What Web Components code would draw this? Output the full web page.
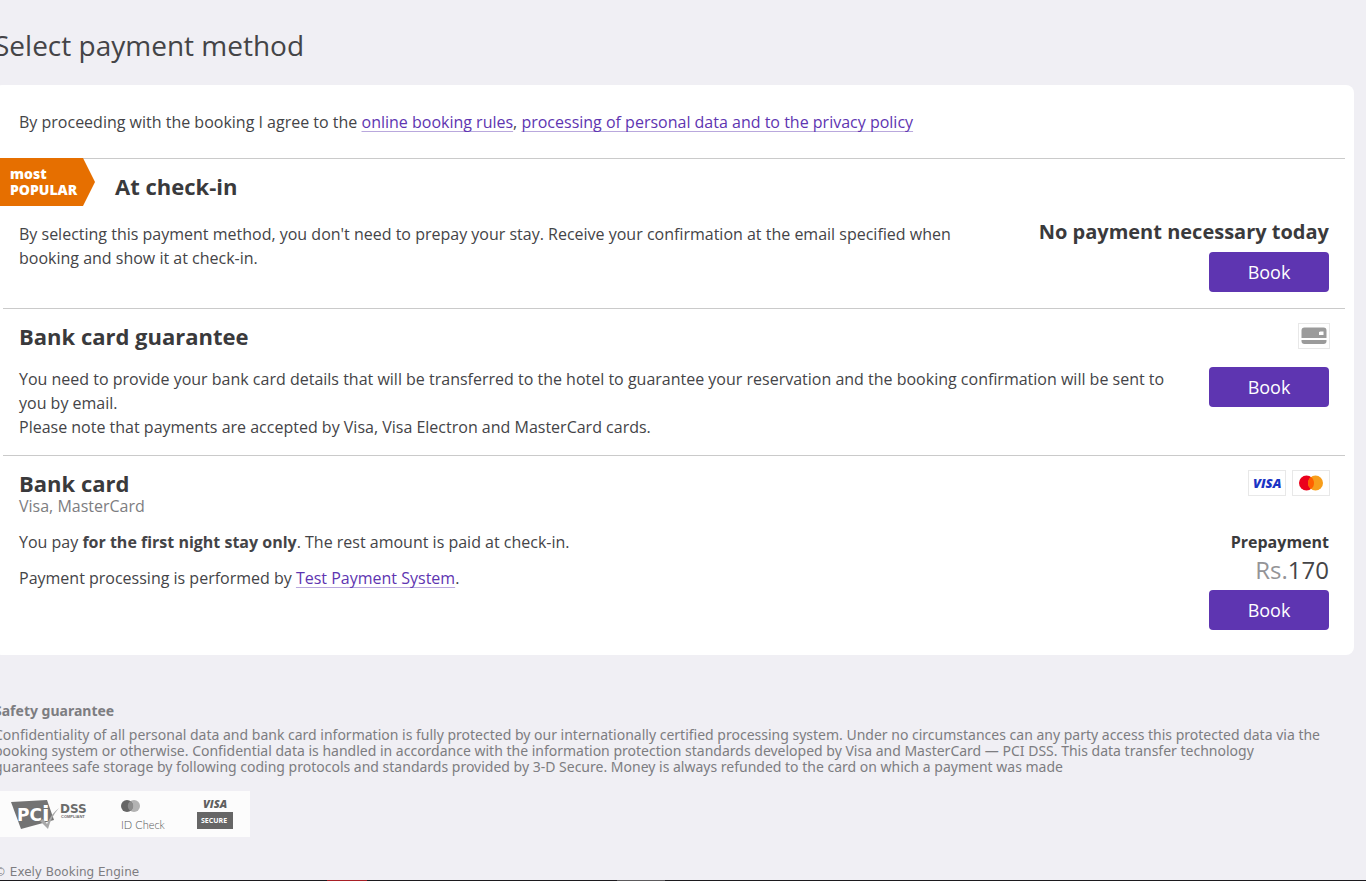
<!DOCTYPE html>
<html lang="en">
<head>
<meta charset="utf-8">
<meta name="viewport" content="width=device-width, initial-scale=1">
<title>Select payment method</title>
<style>
    body {
        --pay-text: #444447;
        --pay-heading: #3a3a3c;
        --pay-muted: #7d7d81;
        --pay-accent: #5e35b1;
        --pay-line: #cacaca;
        margin: 0;
        background: #f0eff4;
        color: var(--pay-text);
        font: 16px/24px "Open Sans", "Noto Sans", sans-serif;
    }
</style>
</head>
<body>
<pay-page>
    <h1 slot="title">Select payment method</h1>
    <pay-panel>
        <span slot="terms">By proceeding with the booking I agree to the <pay-link href="#rules">online booking rules</pay-link>, <pay-link href="#privacy">processing of personal data and to the privacy policy</pay-link></span>
        <pay-method heading="At check-in" popular>
            By selecting this payment method, you don't need to prepay your stay. Receive your confirmation at the email specified when booking and show it at check-in.
            <span slot="note">No payment necessary today</span>
        </pay-method>
        <pay-method heading="Bank card guarantee">
            <pay-brand slot="brands" name="card"></pay-brand>
            You need to provide your bank card details that will be transferred to the hotel to guarantee your reservation and the booking confirmation will be sent to you by email.<br>Please note that payments are accepted by Visa, Visa Electron and MasterCard cards.
        </pay-method>
        <pay-method heading="Bank card" subheading="Visa, MasterCard">
            <pay-brand slot="brands" name="visa"></pay-brand>
            <pay-brand slot="brands" name="mastercard"></pay-brand>
            <pay-text>You pay <b>for the first night stay only</b>. The rest amount is paid at check-in.</pay-text>
            <pay-text>Payment processing is performed by <pay-link href="#processor">Test Payment System</pay-link>.</pay-text>
            <pay-price slot="price" label="Prepayment" currency="Rs." amount="170"></pay-price>
        </pay-method>
    </pay-panel>
    <pay-safety slot="footer"></pay-safety>
</pay-page>
<pay-taskbar></pay-taskbar>

<script>
// PayPage
class PayPage extends HTMLElement {

    constructor() {
        super();

        var shadowRoot = this.attachShadow({ mode: 'open' });
        shadowRoot.innerHTML = `<style>
        :host {
            display: block;
            overflow: hidden;
        }
        .page {
            margin: 0 12px 0 -6px;
            padding-top: 25px;
        }
        ::slotted(h1) {
            margin: 0 0 20px;
            font-size: 28px;
            line-height: 40px;
            font-weight: 400;
        }
        </style>
        <main class="page">
            <slot name="title"></slot>
            <slot></slot>
            <slot name="footer"></slot>
        </main>
        `
    };
}

// PayPanel
class PayPanel extends HTMLElement {

    constructor() {
        super();

        var shadowRoot = this.attachShadow({ mode: 'open' });
        shadowRoot.innerHTML = `<style>
        :host {
            display: block;
            background: #fff;
            border-radius: 8px;
            padding: 0 9px 9px;
        }
        .terms {
            padding: 25px 16px 24px;
        }
        </style>
        <div class="terms"><slot name="terms"></slot></div>
        <slot></slot>
        `
    };
}

// PayLink
class PayLink extends HTMLElement {

    get href() {
        return this.getAttribute('href');
    }

    constructor() {
        super();

        var shadowRoot = this.attachShadow({ mode: 'open' });
        shadowRoot.innerHTML = `<style>
        :host {
            display: inline;
        }
        a {
            color: var(--pay-accent);
            text-decoration: underline 1px #b9a8dd;
            text-decoration-skip-ink: none;
            text-underline-offset: 3px;
        }
        a:hover {
            text-decoration: none;
        }
        </style><a href="${this.href}"><slot></slot></a>`
    };
}

// PayText
class PayText extends HTMLElement {

    constructor() {
        super();

        var shadowRoot = this.attachShadow({ mode: 'open' });
        shadowRoot.innerHTML = `<style>
        :host {
            display: block;
            margin-bottom: 12px;
        }
        </style><slot></slot>`
    };
}

// PayButton
class PayButton extends HTMLElement {

    constructor() {
        super();

        var shadowRoot = this.attachShadow({ mode: 'open' });
        shadowRoot.innerHTML = `<style>
        :host {
            display: block;
        }
        button {
            display: block;
            width: 120px;
            height: 40px;
            padding: 0;
            border: 0;
            border-radius: 4px;
            background: var(--pay-accent);
            color: #fff;
            font: 500 18px/40px "Open Sans", "Noto Sans", sans-serif;
            cursor: pointer;
        }
        button:hover {
            background: #512da8;
        }
        </style>
        <button type="button"><slot></slot></button>
        `
    };
}

// PayBadge
class PayBadge extends HTMLElement {

    constructor() {
        super();

        var shadowRoot = this.attachShadow({ mode: 'open' });
        shadowRoot.innerHTML = `<style>
        :host {
            display: block;
            box-sizing: border-box;
            width: 101px;
            height: 48px;
            padding: 8px 0 8px 16px;
            background: #e66f00;
            clip-path: polygon(0 0, 89px 0, 100% 50%, 89px 100%, 0 100%);
            color: #fff;
            font-size: 14px;
            line-height: 16px;
            font-weight: 800;
        }
        </style>
        most<br>POPULAR
        `
    };
}

// PayPrice
class PayPrice extends HTMLElement {

    constructor() {
        super();

        var shadowRoot = this.attachShadow({ mode: 'open' });
        shadowRoot.innerHTML = `<style>
        :host {
            display: block;
            text-align: right;
        }
        .label {
            font-weight: 700;
            color: var(--pay-heading);
        }
        .amount {
            font-size: 24px;
            line-height: 32px;
            margin-bottom: 4px;
        }
        .currency {
            color: #949497;
        }
        </style>
        <div class="label">${this.getAttribute('label')}</div>
        <div class="amount"><span class="currency">${this.getAttribute('currency')}</span>${this.getAttribute('amount')}</div>
        `
    };
}

// PayBrand
const brands = {
    card: `<svg width="26" height="18" viewBox="0 0 26 18" fill="#9b9b9b" aria-hidden="true">
        <path fill-rule="evenodd" d="M3.500 .5h19q3 0 3 3v7.500H.5V3.500q0-3 3-3ZM18 5v3h4.500V4.500h-3Z"/>
        <path d="M.5 13h25v1q0 3-3 3h-19q-3 0-3-3Z"/>
    </svg>`,
    visa: `<svg width="30" height="18" viewBox="0 0 30 18" role="img" aria-label="Visa">
        <text x="1" y="14" font-family="Open Sans" font-size="13" font-style="italic" font-weight="800" fill="#1a34c4">VISA</text>
    </svg>`,
    mastercard: `<svg width="26" height="18" viewBox="0 0 26 18" role="img" aria-label="MasterCard">
        <circle cx="8.500" cy="9" r="7.500" fill="#eb001b"/>
        <circle cx="17.500" cy="9" r="7.500" fill="#f79e1b"/>
        <path d="M13 3a7.500 7.500 0 0 1 0 12a7.500 7.500 0 0 1 0-12Z" fill="#ff5f00"/>
    </svg>`
};

class PayBrand extends HTMLElement {

    get name() {
        return this.getAttribute('name');
    }

    constructor() {
        super();

        var shadowRoot = this.attachShadow({ mode: 'open' });
        shadowRoot.innerHTML = `<style>
        :host {
            display: flex;
            align-items: center;
            justify-content: center;
            box-sizing: border-box;
            width: 38px;
            height: 26px;
            border: 1px solid #e8e8e8;
        }
        :host([name="card"]) {
            width: 32px;
        }
        svg {
            display: block;
        }
        </style>
        ${brands[this.name]}
        `
    };
}

// PayMethod
class PayMethod extends HTMLElement {

    get heading() {
        return this.getAttribute('heading');
    }

    get subheading() {
        return this.getAttribute('subheading');
    }

    constructor() {
        super();

        var shadowRoot = this.attachShadow({ mode: 'open' });
        shadowRoot.innerHTML = `<style>
        :host {
            display: block;
            border-top: 1px solid var(--pay-line);
            padding: 0 16px 16px;
        }
        .head {
            display: flex;
            align-items: flex-start;
            margin-bottom: 15px;
        }
        :host([popular]) .head {
            margin-bottom: 12px;
        }
        pay-badge {
            margin: -1px 20px 0 -25px;
        }
        .titles {
            flex: 1;
            padding-top: 11px;
        }
        h2 {
            margin: 0;
            font-size: 22px;
            line-height: 32px;
            font-weight: 700;
            color: var(--pay-heading);
        }
        p {
            margin: 0;
            line-height: 14px;
            color: var(--pay-muted);
        }
        .brands {
            display: flex;
            gap: 6px;
            padding-top: 14px;
            margin-right: -1px;
        }
        .body {
            display: flex;
            justify-content: space-between;
            align-items: flex-start;
            gap: 40px;
        }
        .action {
            display: flex;
            flex-direction: column;
            align-items: flex-end;
            flex: none;
        }
        :host([subheading]) .text,
        :host([subheading]) .action {
            padding-top: 2px;
        }
        :host([popular]) .text {
            padding-top: 4px;
        }
        :host([popular]) .body {
            gap: 80px;
        }
        ::slotted([slot="note"]) {
            display: block;
            margin-bottom: 6px;
            font-size: 20px;
            line-height: 28px;
            font-weight: 700;
            color: var(--pay-heading);
        }
        </style>
        <section>
            <div class="head">
                ${this.hasAttribute('popular') ? '<pay-badge></pay-badge>' : ''}
                <div class="titles">
                    <h2>${this.heading}</h2>
                    ${this.subheading ? `<p>${this.subheading}</p>` : ''}
                </div>
                <div class="brands"><slot name="brands"></slot></div>
            </div>
            <div class="body">
                <div class="text"><slot></slot></div>
                <div class="action">
                    <slot name="note"></slot>
                    <slot name="price"></slot>
                    <pay-button>Book</pay-button>
                </div>
            </div>
        </section>
        `
    };
}

// PaySafety
class PaySafety extends HTMLElement {

    constructor() {
        super();

        var shadowRoot = this.attachShadow({ mode: 'open' });
        shadowRoot.innerHTML = `<style>
        :host {
            display: block;
            padding-top: 48px;
            color: var(--pay-muted);
            font: 14px/16px "Noto Sans", "Open Sans", sans-serif;
        }
        h3 {
            margin: 0 0 8px;
            font-size: 14px;
            line-height: 16px;
            font-weight: 700;
        }
        p {
            margin: 0 0 16px;
            padding-right: 28px;
        }
        .logos {
            display: block;
            margin-bottom: 27px;
        }
        .copyright {
            display: block;
            font: 12px/16px "DejaVu Sans", sans-serif;
        }
        </style>
        <h3>Safety guarantee</h3>
        <p>Confidentiality of all personal data and bank card information is fully protected by our internationally certified processing system. Under no circumstances can any party access this protected data via the booking system or otherwise. Confidential data is handled in accordance with the information protection standards developed by Visa and MasterCard — PCI DSS. This data transfer technology guarantees safe storage by following coding protocols and standards provided by 3-D Secure. Money is always refunded to the card on which a payment was made</p>
        <svg class="logos" width="256" height="46" viewBox="-6 0 256 46" font-family="Open Sans">
            <path fill="#fcfcfc" d="M-6 0h256v46H-6Z"/>
            <path fill="#737373" d="M11 11l36-2 7 20-33 9Z"/>
            <text x="17" y="30" font-family="DejaVu Sans" font-size="17" font-weight="700" fill="#fff">PC<tspan font-size="22">i</tspan></text>
            <path fill="#a8a8a8" d="M40 30l3-2 4 5q4-10 12-16q-8 9-11 21Z"/>
            <text x="60" y="22" font-family="DejaVu Sans" font-size="12" font-weight="700" fill="#6b6b6b">DSS</text>
            <text x="61" y="27" font-family="Liberation Sans" font-size="4" font-weight="700" fill="#6b6b6b">COMPLIANT</text>
            <circle cx="134" cy="15" r="6" fill="#b3b3b3"/>
            <circle cx="127" cy="15" r="6" fill="#666"/>
            <path fill="#8c8c8c" d="M130.500 10a6 6 0 0 1 0 10a6 6 0 0 1 0-10Z"/>
            <text x="121" y="38" font-family="Lato" font-size="11" font-weight="300" fill="#555">ID Check</text>
            <text x="203" y="17" font-size="11" font-style="italic" font-weight="800" fill="#5f5f5f">VISA</text>
            <path fill="#666" d="M197 21h36v17h-36Z"/>
            <text x="201" y="32" font-size="7" font-weight="700" fill="#fff">SECURE</text>
        </svg>
        <small class="copyright">© Exely Booking Engine</small>
        `
    };
}

// PayTaskbar
class PayTaskbar extends HTMLElement {

    constructor() {
        super();

        var shadowRoot = this.attachShadow({ mode: 'open' });
        shadowRoot.innerHTML = `<style>
        :host {
            display: flex;
            height: 2px;
            background: #1c1a1e;
        }
        i {
            width: 40px;
            margin-left: 327px;
            background: #a81f25;
        }
        i + i {
            width: 48px;
            margin-left: 250px;
            background: #5c5a5c;
        }
        </style><i></i><i></i>`
    };
}

customElements.define('pay-page', PayPage);
customElements.define('pay-panel', PayPanel);
customElements.define('pay-link', PayLink);
customElements.define('pay-text', PayText);
customElements.define('pay-button', PayButton);
customElements.define('pay-badge', PayBadge);
customElements.define('pay-price', PayPrice);
customElements.define('pay-brand', PayBrand);
customElements.define('pay-method', PayMethod);
customElements.define('pay-safety', PaySafety);
customElements.define('pay-taskbar', PayTaskbar);
</script>
</body>
</html>
